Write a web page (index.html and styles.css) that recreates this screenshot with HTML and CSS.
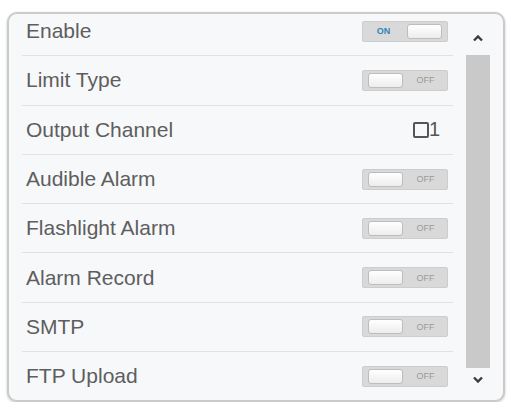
FILE: index.html
```html
<!DOCTYPE html>
<html lang="en">
<head>
    <meta charset="UTF-8">
    <meta name="viewport" content="width=device-width, initial-scale=1.0">
    <title>Alarm Settings</title>
    <link rel="stylesheet" href="styles.css">
</head>
<body>
    <div class="panel">
        <div class="list">
            <div class="rows">
                <div class="row">
                    <span class="label">Enable</span>
                    <span class="switch on"><span class="switch-text">ON</span><span class="knob"></span></span>
                </div>
                <div class="row">
                    <span class="label">Limit Type</span>
                    <span class="switch"><span class="knob"></span><span class="switch-text">OFF</span></span>
                </div>
                <div class="row">
                    <span class="label">Output Channel</span>
                    <span class="channel"><span class="checkbox"></span>1</span>
                </div>
                <div class="row">
                    <span class="label">Audible Alarm</span>
                    <span class="switch"><span class="knob"></span><span class="switch-text">OFF</span></span>
                </div>
                <div class="row">
                    <span class="label">Flashlight Alarm</span>
                    <span class="switch"><span class="knob"></span><span class="switch-text">OFF</span></span>
                </div>
                <div class="row">
                    <span class="label">Alarm Record</span>
                    <span class="switch"><span class="knob"></span><span class="switch-text">OFF</span></span>
                </div>
                <div class="row">
                    <span class="label">SMTP</span>
                    <span class="switch"><span class="knob"></span><span class="switch-text">OFF</span></span>
                </div>
                <div class="row">
                    <span class="label">FTP Upload</span>
                    <span class="switch"><span class="knob"></span><span class="switch-text">OFF</span></span>
                </div>
            </div>
        </div>
        <div class="scrollbar">
            <div class="arrow arrow-up">
                <svg width="12" height="8" viewBox="0 0 12 8"><path d="M2 6.5 L6 2.5 L10 6.5" fill="none" stroke="#3c3c3c" stroke-width="2.4"/></svg>
            </div>
            <div class="track"></div>
            <div class="arrow arrow-down">
                <svg width="12" height="8" viewBox="0 0 12 8"><path d="M2 1.5 L6 5.5 L10 1.5" fill="none" stroke="#3c3c3c" stroke-width="2.4"/></svg>
            </div>
        </div>
    </div>
</body>
</html>
```

FILE: styles.css
```css
body {
    margin: 0;
    background-color: #ffffff;
    font-family: "Liberation Sans", Arial, sans-serif;
}

.panel {
    box-sizing: border-box;
    width: 498px;
    height: 390px;
    margin: 12px 0 0 7px;
    display: flex;
    background-color: #f7f8fa;
    border: 2px solid #cbcbcb;
    border-radius: 10px;
    box-shadow: 0 1px 3px rgba(0, 0, 0, 0.2);
    overflow: hidden;
}

.list {
    width: 444px;
    padding-left: 13px;
    box-sizing: border-box;
    overflow: hidden;
}

/* list is scrolled a few pixels down */
.rows {
    margin-top: -7px;
}

.row {
    height: 48.3px;
    display: flex;
    align-items: center;
    justify-content: space-between;
    padding: 0 5px 0 4px;
    border-bottom: 1px solid #e1e2e4;
}

.label {
    font-size: 21px;
    color: #5e5e5e;
}

.switch {
    box-sizing: border-box;
    width: 86px;
    height: 21px;
    display: flex;
    align-items: center;
    background-color: #d9d9d9;
    border: 1px solid #cdcdcd;
    border-radius: 2px;
}

.knob {
    box-sizing: border-box;
    width: 35px;
    height: 15px;
    margin: 0 5px;
    background: linear-gradient(#ffffff, #ededed);
    border: 1px solid #bdbdbd;
    border-radius: 3px;
}

.switch-text {
    flex: 1;
    text-align: center;
    font-size: 9px;
    color: #9a9a9a;
    padding-right: 4px;
}

.switch.on .switch-text {
    color: #2f86b8;
    font-weight: bold;
    padding-right: 0;
    padding-left: 2px;
}

.channel {
    display: flex;
    align-items: center;
    margin-right: 8px;
    font-size: 20px;
    color: #555555;
}

.checkbox {
    box-sizing: border-box;
    width: 16px;
    height: 16px;
    border: 2px solid #555555;
    border-radius: 2px;
}

.scrollbar {
    flex: 1;
    display: flex;
    flex-direction: column;
    align-items: center;
}

.arrow {
    display: flex;
    justify-content: center;
    align-items: center;
}

.arrow-up {
    height: 41px;
    padding-top: 6px;
    box-sizing: border-box;
}

.arrow-down {
    height: 32px;
    padding-bottom: 9px;
    box-sizing: border-box;
}

.track {
    flex: 1;
    width: 24px;
    background-color: #c9c9c9;
}
```
